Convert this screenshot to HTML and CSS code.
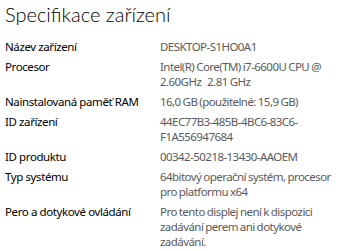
FILE: index.html
```html
<!DOCTYPE html>
<html lang="cs">
<head>
<meta charset="utf-8">
<link rel="stylesheet" href="styles.css">
</head>
<body>
<h1 class="title">Specifikace zařízení</h1>
<dl class="specs">
  <dt>Název zařízení</dt><dd>DESKTOP-S1HO0A1</dd>
  <dt>Procesor</dt><dd>Intel(R) Core(TM) i7-6600U CPU @ 2.60GHz&nbsp;&nbsp;&nbsp;2.81 GHz</dd>
  <dt>Nainstalovaná paměť RAM</dt><dd>16,0 GB (použitelné: 15,9 GB)</dd>
  <dt>ID zařízení</dt><dd>44EC77B3-485B-4BC6-83C6-F1A556947684</dd>
  <dt>ID produktu</dt><dd>00342-50218-13430-AAOEM</dd>
  <dt>Typ systému</dt><dd>64bitový operační systém, procesor pro platformu x64</dd>
  <dt>Pero a dotykové ovládání</dt><dd>Pro tento displej není k dispozici zadávání perem ani dotykové zadávání.</dd>
</dl>
</body>
</html>
```
FILE: styles.css
```css
html, body {
  margin: 0;
  padding: 0;
  background: #ffffff;
}
body {
  padding: 0 0 0 5px;
  font-family: "Noto Sans", "Open Sans", sans-serif;
  color: #000;
}
.title {
  margin: 0;
  padding-top: 2px;
  font-family: Lato, "Noto Sans", sans-serif;
  font-size: 20px;
  font-weight: 300;
  line-height: 24px;
  color: #000;
}
.specs {
  margin: 13px 0 0;
  display: grid;
  grid-template-columns: 155px 180px;
  row-gap: 5px;
  font-size: 11.5px;
  letter-spacing: -0.4px;
  line-height: 15px;
}
.specs dt {
  margin: 0;
  color: #000;
}
.specs dd {
  margin: 0;
  color: #5a5a5a;
  letter-spacing: -0.55px;
  word-spacing: -0.5px;
  overflow-wrap: anywhere;
}
```
